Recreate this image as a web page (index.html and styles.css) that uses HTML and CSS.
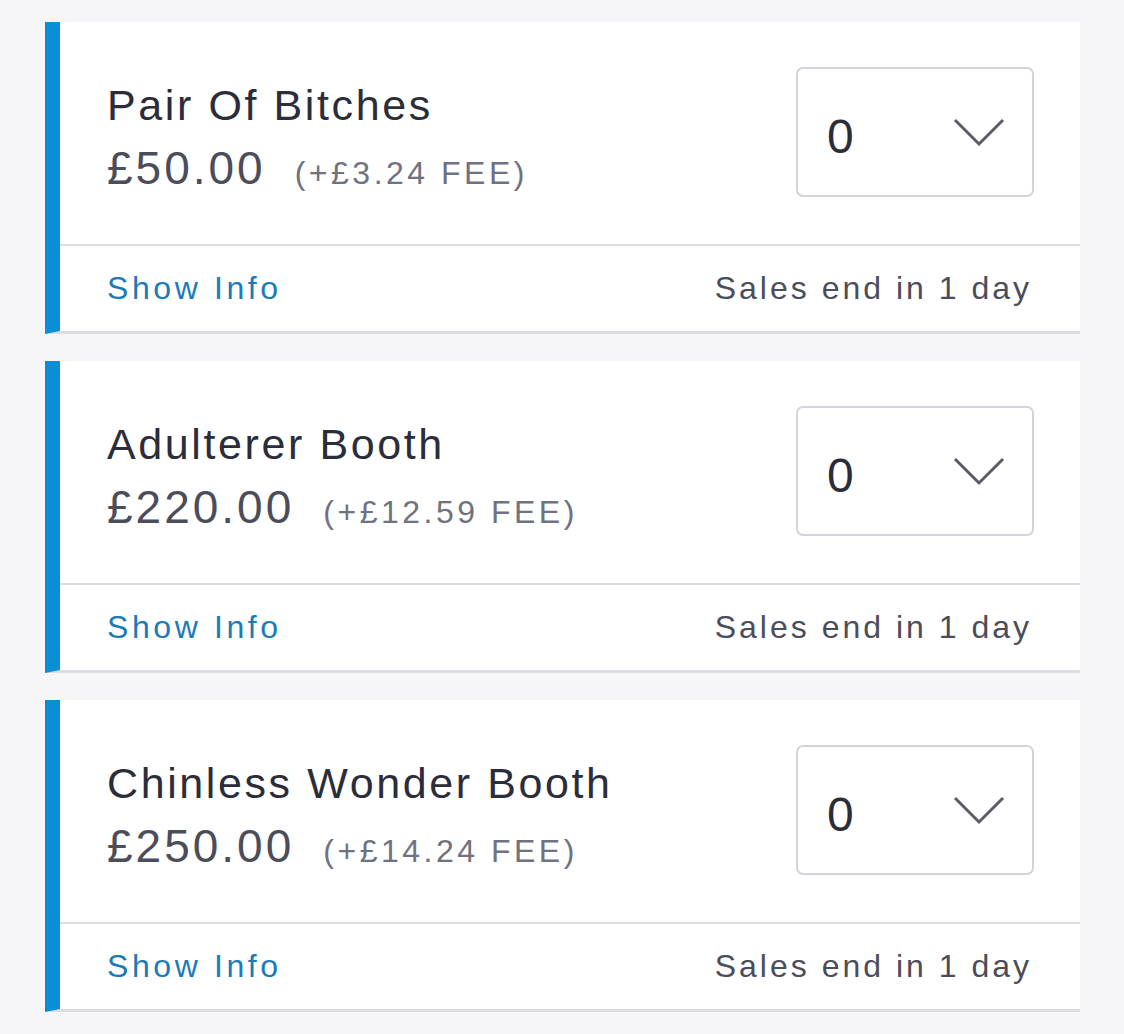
FILE: index.html
```html
<!DOCTYPE html>
<html>
	<head>
		<meta charset="utf-8">
		<title>Tickets</title>
		<link rel="stylesheet" href="styles.css">
	</head>
	<body>
		<main class="ticket-list">
			<section class="ticket">
				<div class="ticket-top">
					<div class="ticket-info">
						<h2 class="ticket-name">Pair Of Bitches</h2>
						<p class="ticket-price">£50.00<span class="ticket-fee">(+£3.24 FEE)</span></p>
					</div>
					<div class="qty-select">
						<span class="qty-value">0</span>
						<svg class="qty-chevron" width="52" height="30" viewBox="0 0 52 30"><path d="M2 3 L26 27 L50 3" fill="none" stroke="#5a5c66" stroke-width="3"/></svg>
					</div>
				</div>
				<div class="ticket-bottom">
					<a class="show-info" href="#">Show Info</a>
					<span class="sales-end">Sales end in 1 day</span>
				</div>
			</section>
			<section class="ticket">
				<div class="ticket-top">
					<div class="ticket-info">
						<h2 class="ticket-name">Adulterer Booth</h2>
						<p class="ticket-price">£220.00<span class="ticket-fee">(+£12.59 FEE)</span></p>
					</div>
					<div class="qty-select">
						<span class="qty-value">0</span>
						<svg class="qty-chevron" width="52" height="30" viewBox="0 0 52 30"><path d="M2 3 L26 27 L50 3" fill="none" stroke="#5a5c66" stroke-width="3"/></svg>
					</div>
				</div>
				<div class="ticket-bottom">
					<a class="show-info" href="#">Show Info</a>
					<span class="sales-end">Sales end in 1 day</span>
				</div>
			</section>
			<section class="ticket">
				<div class="ticket-top">
					<div class="ticket-info">
						<h2 class="ticket-name">Chinless Wonder Booth</h2>
						<p class="ticket-price">£250.00<span class="ticket-fee">(+£14.24 FEE)</span></p>
					</div>
					<div class="qty-select">
						<span class="qty-value">0</span>
						<svg class="qty-chevron" width="52" height="30" viewBox="0 0 52 30"><path d="M2 3 L26 27 L50 3" fill="none" stroke="#5a5c66" stroke-width="3"/></svg>
					</div>
				</div>
				<div class="ticket-bottom">
					<a class="show-info" href="#">Show Info</a>
					<span class="sales-end">Sales end in 1 day</span>
				</div>
			</section>
		</main>
	</body>
</html>
```

FILE: styles.css
```css
* {
	margin: 0;
	padding: 0;
	box-sizing: border-box;
}
body {
	background: #f6f6f8;
	font-family: "Liberation Sans", Arial, sans-serif;
	color: #2b2d3a;
}
.ticket-list {
	padding: 22px 44px 0 45px;
	display: flex;
	flex-direction: column;
	gap: 27px;
}
.ticket {
	background: #fff;
	border-left: 15px solid #0a8fd6;
	border-bottom: 3px solid #dbdce2;
}
.ticket-top {
	height: 224px;
	display: flex;
	justify-content: space-between;
	align-items: flex-start;
	padding: 45px 46px 0 47px;
	border-bottom: 2px solid #dbdce2;
}
.ticket-info {
	padding-top: 12px;
}
.ticket-name {
	font-size: 43px;
	font-weight: 400;
	line-height: 52px;
	color: #2b2d3a;
	letter-spacing: 2.6px;
}
.ticket-price {
	font-size: 46px;
	line-height: 74px;
	color: #4b4d5a;
	letter-spacing: 3px;
}
.ticket-fee {
	font-size: 32px;
	color: #6f7280;
	margin-left: 29px;
	letter-spacing: 3.5px;
}
.qty-select {
	width: 238px;
	height: 130px;
	border: 2px solid #d3d4db;
	border-radius: 7px;
	display: flex;
	align-items: center;
	justify-content: space-between;
	padding: 0 27px 0 29px;
}
.qty-value {
	font-size: 48px;
	color: #2b2d3a;
	margin-top: 8px;
}
.ticket-bottom {
	height: 85px;
	display: flex;
	justify-content: space-between;
	align-items: center;
	padding: 0 48px 0 47px;
}
.show-info {
	font-size: 32px;
	color: #1a7bb9;
	text-decoration: none;
	letter-spacing: 3.6px;
}
.sales-end {
	font-size: 32px;
	color: #4b4d5a;
	letter-spacing: 3px;
}
```
